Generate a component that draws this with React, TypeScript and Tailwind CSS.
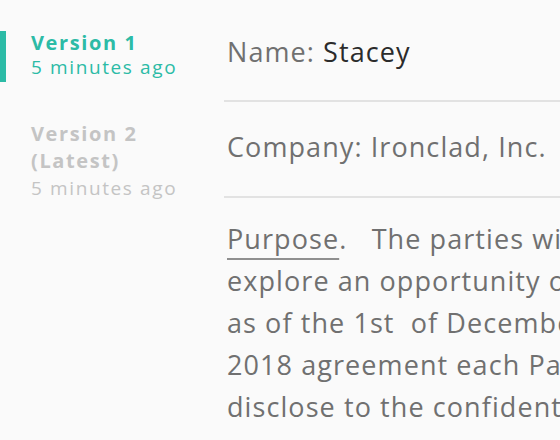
const lines = [
  "explore an opportunity of",
  "as of the 1st\u00a0 of December",
  "2018 agreement each Party",
  "disclose to the confidential",
];

export default function App() {
  return (
    <div
      className="flex h-[440px] w-[560px] overflow-hidden bg-[#fafafa]"
      style={{ fontFamily: "'Open Sans', Lato, sans-serif" }}
    >
      <aside className="flex w-[224px] shrink-0 flex-col pt-[31px]">
        {/* active version */}
        <div className="flex">
          <div className="w-[6px] shrink-0 bg-[#2cbba6]" />
          <div className="pl-[25px] pb-[3px] text-[#2cbba6]">
            <div className="text-[20px] font-bold leading-[24px] tracking-[0.08em]">Version 1</div>
            <div className="text-[19px] leading-[24px] tracking-[0.085em]">5 minutes ago</div>
          </div>
        </div>
        <div className="mt-[38px] flex">
          <div className="w-[6px] shrink-0" />
          <div className="pl-[25px] text-[#c4c4c4]">
            <div className="text-[20px] font-bold leading-[27px] tracking-[0.08em]">Version 2</div>
            <div className="text-[20px] font-bold leading-[27px] tracking-[0.08em]">(Latest)</div>
            <div className="text-[19px] leading-[29px] tracking-[0.085em]">5 minutes ago</div>
          </div>
        </div>
      </aside>
      <main className="min-w-0 flex-1 text-[27px] tracking-[0.04em] text-[#707070]">
        <div className="w-[400px]">
          <div className="border-b-2 border-[#e2e2e2] pt-[32px] pb-[28px] pl-[3px] leading-[40px]">
            Name: <span className="text-[#2b2b2b]">Stacey</span>
          </div>
          <div className="border-b-2 border-[#e2e2e2] pt-[25px] pb-[29px] pl-[3px] leading-[40px]">
            Company: Ironclad, Inc.
          </div>
        </div>
        <div className="whitespace-nowrap pt-[20px] pl-[3px] leading-[42px]">
          <div>
            <span className="underline decoration-[#8f8f8f] decoration-2 underline-offset-[9px]">Purpose</span>.&nbsp;&nbsp;&nbsp;The parties wi
          </div>
          {lines.map((l) => (
            <div key={l}>{l}</div>
          ))}
        </div>
      </main>
    </div>
  );
}
